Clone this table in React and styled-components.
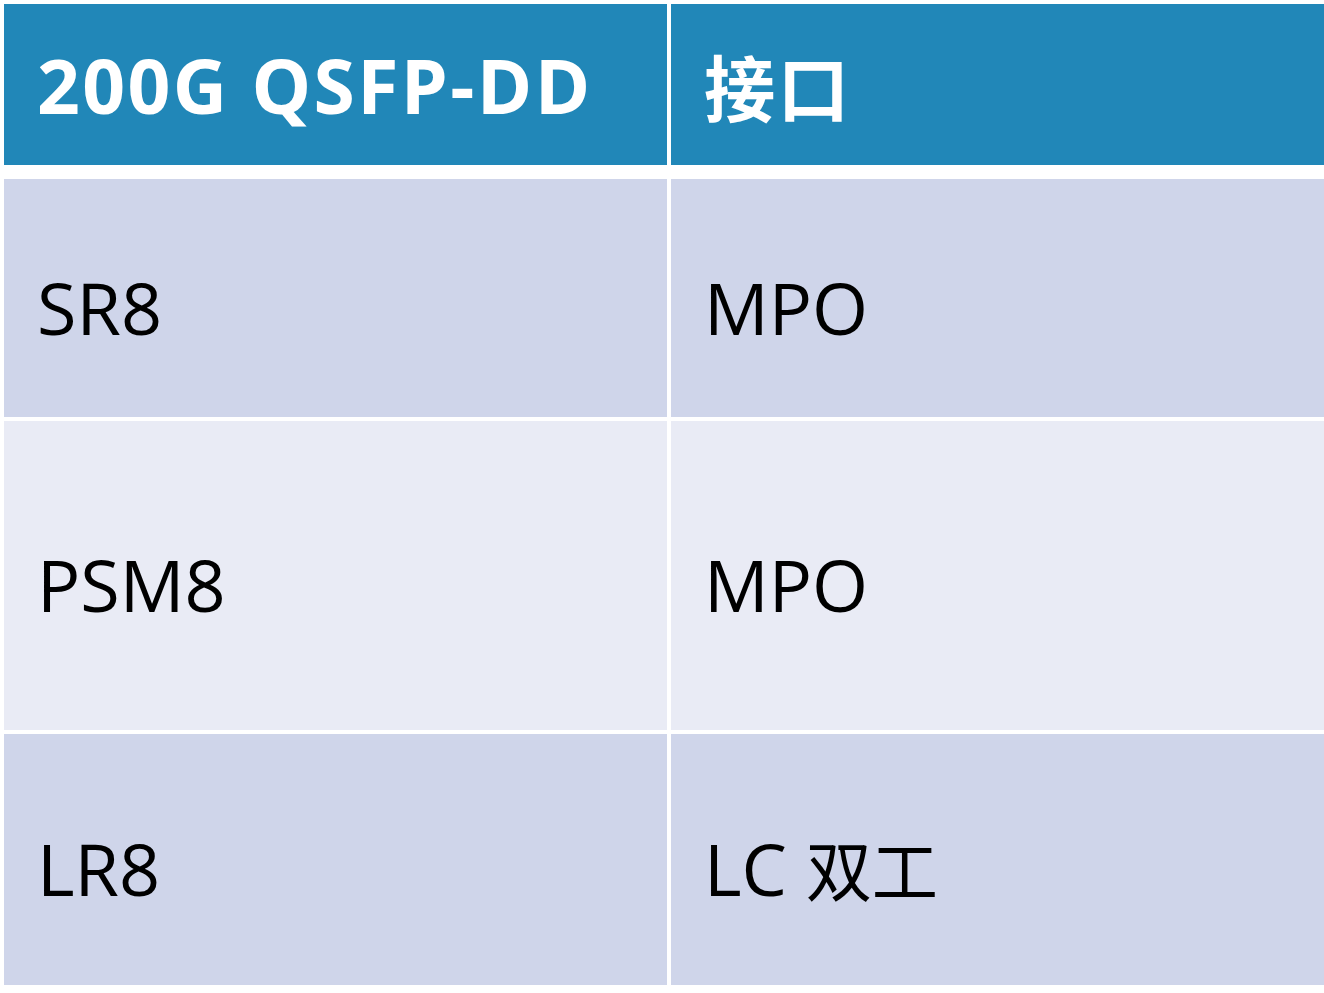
import React from 'react'
import styled, {createGlobalStyle} from 'styled-components'

const Global = createGlobalStyle`
  html, body {
    margin: 0;
    padding: 0;
    background: #fff;
    overflow: hidden;
  }
`

const Table = styled.div`
  display: grid;
  grid-template-columns: 663px 663px;
  column-gap: 4px;
  padding: 4px 0 0 4px;
  width: 1340px;
  font-family: "Open Sans", "Noto Sans CJK SC", sans-serif;
`

const Cjk = styled.span`
  font-family: "Noto Sans CJK SC", sans-serif;
  font-size: ${p => p.$scale || 0.92}em;
`

const HeadCell = styled.div`
  height: 161px;
  margin-bottom: 14px;
  background: #2187b8;
  color: #fff;
  font-weight: 700;
  font-size: 75px;
  display: flex;
  align-items: center;
  padding: 0 0 0 33px;
  box-sizing: border-box;
  letter-spacing: 2.4px;
`

const Cell = styled.div`
  height: ${p => p.$h}px;
  margin-bottom: 4px;
  background: ${p => (p.$shade === 'dark' ? '#cfd5ea' : '#e9ebf5')};
  color: #000;
  font-size: 72px;
  display: flex;
  align-items: center;
  padding: 17px 0 0 33px;
  box-sizing: border-box;
`

const Label = styled.span`
  white-space: pre;
`

const rows = [
  {name: 'SR8', port: 'MPO', height: 238, shade: 'dark'},
  {name: 'PSM8', port: 'MPO', height: 309, shade: 'light'},
  {name: 'LR8', port: <>LC <Cjk>双工</Cjk></>, height: 251, shade: 'dark'},
]

export default function App() {
  return (
    <>
      <Global />
      <Table>
        <HeadCell><Label>200G QSFP-DD</Label></HeadCell>
        <HeadCell><Cjk $scale={0.95}>接口</Cjk></HeadCell>
        {rows.map(r => (
          <React.Fragment key={r.name}>
            <Cell $h={r.height} $shade={r.shade}><Label>{r.name}</Label></Cell>
            <Cell $h={r.height} $shade={r.shade}><Label>{r.port}</Label></Cell>
          </React.Fragment>
        ))}
      </Table>
    </>
  )
}
